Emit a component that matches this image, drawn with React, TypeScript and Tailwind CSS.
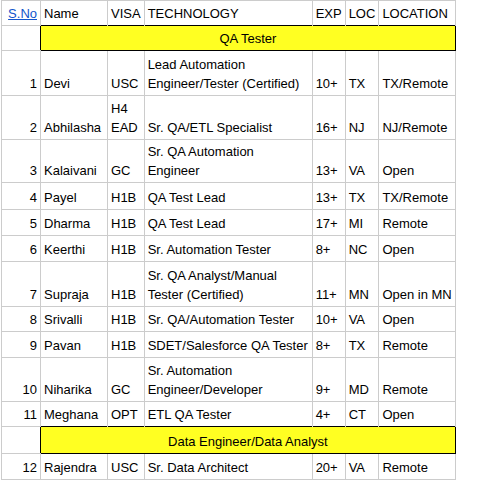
import React from "react"

type Row = {
  no: string
  name: string
  visa: string[]
  tech: string[]
  exp: string
  loc: string
  location: string
  h: string
}

const qaRows: Row[] = [
  { no: "1", name: "Devi", visa: ["USC"], tech: ["Lead Automation", "Engineer/Tester (Certified)"], exp: "10+", loc: "TX", location: "TX/Remote", h: "h-[45px]" },
  { no: "2", name: "Abhilasha", visa: ["H4", "EAD"], tech: ["Sr. QA/ETL Specialist"], exp: "16+", loc: "NJ", location: "NJ/Remote", h: "h-[44px]" },
  { no: "3", name: "Kalaivani", visa: ["GC"], tech: ["Sr. QA Automation", "Engineer"], exp: "13+", loc: "VA", location: "Open", h: "h-[40px]" },
  { no: "4", name: "Payel", visa: ["H1B"], tech: ["QA Test Lead"], exp: "13+", loc: "TX", location: "TX/Remote", h: "h-[27px]" },
  { no: "5", name: "Dharma", visa: ["H1B"], tech: ["QA Test Lead"], exp: "17+", loc: "MI", location: "Remote", h: "h-[26px]" },
  { no: "6", name: "Keerthi", visa: ["H1B"], tech: ["Sr. Automation Tester"], exp: "8+", loc: "NC", location: "Open", h: "h-[26px]" },
  { no: "7", name: "Supraja", visa: ["H1B"], tech: ["Sr. QA Analyst/Manual", "Tester (Certified)"], exp: "11+", loc: "MN", location: "Open in MN", h: "h-[45px]" },
  { no: "8", name: "Srivalli", visa: ["H1B"], tech: ["Sr. QA/Automation Tester"], exp: "10+", loc: "VA", location: "Open", h: "h-[25px]" },
  { no: "9", name: "Pavan", visa: ["H1B"], tech: ["SDET/Salesforce QA Tester"], exp: "8+", loc: "TX", location: "Remote", h: "h-[26px]" },
  { no: "10", name: "Niharika", visa: ["GC"], tech: ["Sr. Automation", "Engineer/Developer"], exp: "9+", loc: "MD", location: "Remote", h: "h-[44px]" },
  { no: "11", name: "Meghana", visa: ["OPT"], tech: ["ETL QA Tester"], exp: "4+", loc: "CT", location: "Open", h: "h-[25px]" },
]

const dataRows: Row[] = [
  { no: "12", name: "Rajendra", visa: ["USC"], tech: ["Sr. Data Architect"], exp: "20+", loc: "VA", location: "Remote", h: "h-[26px]" },
]

const cell = "border-r border-b border-[#cccccc] px-[3px] pt-[2px] pb-[2px] align-bottom whitespace-nowrap overflow-hidden"

function Lines({ items }: { items: string[] }) {
  return (
    <>
      {items.map((t, i) => (
        <React.Fragment key={i}>
          {i > 0 && <br />}
          {t}
        </React.Fragment>
      ))}
    </>
  )
}

function DataRow({ r, beforeBand }: { r: Row; beforeBand?: boolean }) {
  const bb = beforeBand ? "border-b-0" : ""
  return (
    <tr className={r.h}>
      <td className={`${cell} border-l text-right`}>{r.no}</td>
      <td className={`${cell} ${bb}`}>{r.name}</td>
      <td className={`${cell} ${bb}`}><Lines items={r.visa} /></td>
      <td className={`${cell} ${bb}`}><Lines items={r.tech} /></td>
      <td className={`${cell} ${bb}`}>{r.exp}</td>
      <td className={`${cell} ${bb}`}>{r.loc}</td>
      <td className={`${cell} ${bb}`}>{r.location}</td>
    </tr>
  )
}

function Band({ title, h }: { title: string; h: string }) {
  return (
    <tr className={h}>
      <td className={`${cell} border-l border-r-0`}></td>
      <td
        colSpan={6}
        className="border border-black bg-[#ffff22] px-[3px] pt-[2px] pb-[2px] text-center align-bottom whitespace-nowrap"
      >
        {title}
      </td>
    </tr>
  )
}

export default function App() {
  return (
    <div className="min-h-screen bg-white pl-px font-['Liberation_Sans',Arial,sans-serif] text-[13px] leading-[19px] text-black">
      <table className="table-fixed border-collapse">
        <colgroup>
          <col className="w-[39px]" />
          <col className="w-[67px]" />
          <col className="w-[36px]" />
          <col className="w-[168px]" />
          <col className="w-[32px]" />
          <col className="w-[33px]" />
          <col className="w-[74px]" />
        </colgroup>
        <tbody>
          <tr className="h-[25px]">
            <td className={`${cell} border-l border-t text-right`}>
              <a href="#" className="text-[#1155cc] underline">S.No</a>
            </td>
            <td className={`${cell} border-t border-b-0`}>Name</td>
            <td className={`${cell} border-t border-b-0`}>VISA</td>
            <td className={`${cell} border-t border-b-0`}>TECHNOLOGY</td>
            <td className={`${cell} border-t border-b-0`}>EXP</td>
            <td className={`${cell} border-t border-b-0`}>LOC</td>
            <td className={`${cell} border-t border-b-0`}>LOCATION</td>
          </tr>
          <Band title="QA Tester" h="h-[25px]" />
          {qaRows.map((r, i) => (
            <DataRow key={r.no} r={r} beforeBand={i === qaRows.length - 1} />
          ))}
          <Band title="Data Engineer/Data Analyst" h="h-[27px]" />
          {dataRows.map((r) => (
            <DataRow key={r.no} r={r} />
          ))}
        </tbody>
      </table>
    </div>
  )
}
